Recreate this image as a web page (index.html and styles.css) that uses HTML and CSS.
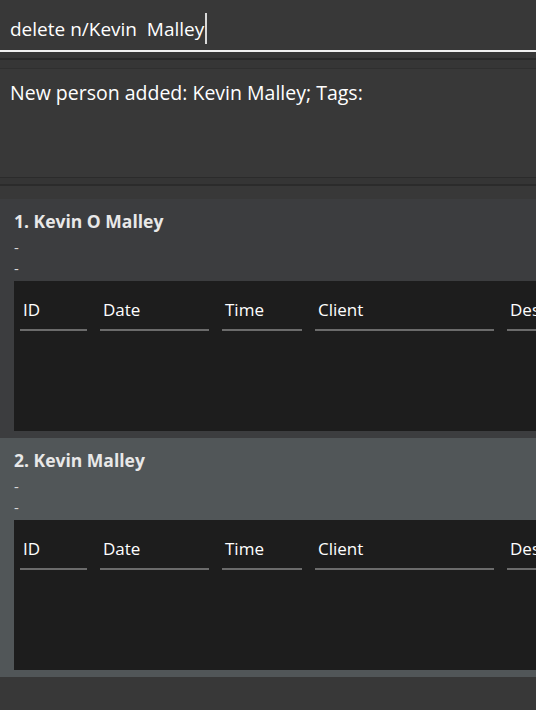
FILE: index.html
```html
<!DOCTYPE html>
<html>
<head>
<meta charset="utf-8">
<link rel="stylesheet" href="styles.css">
</head>
<body>
<div class="app">
  <div class="command">
    <div class="command-field"><span class="command-text">delete n/Kevin&nbsp; Malley</span><span class="caret"></span></div>
  </div>
  <div class="divider divider-a"></div>
  <div class="result">New person added: Kevin Malley; Tags:</div>
  <div class="divider divider-b"></div>
  <div class="list">
    <div class="card">
      <div class="name">1. Kevin O Malley</div>
      <div class="dash">-</div>
      <div class="dash">-</div>
      <div class="table">
        <div class="col col-id">ID</div>
        <div class="col col-date">Date</div>
        <div class="col col-time">Time</div>
        <div class="col col-client">Client</div>
        <div class="col col-desc">Description</div>
      </div>
    </div>
    <div class="card selected">
      <div class="name">2. Kevin Malley</div>
      <div class="dash">-</div>
      <div class="dash">-</div>
      <div class="table">
        <div class="col col-id">ID</div>
        <div class="col col-date">Date</div>
        <div class="col col-time">Time</div>
        <div class="col col-client">Client</div>
        <div class="col col-desc">Description</div>
      </div>
    </div>
  </div>
</div>
</body>
</html>
```
FILE: styles.css
```css
html, body {
  margin: 0;
  padding: 0;
  background: #383838;
}
body {
  width: 536px;
  height: 710px;
  overflow: hidden;
  font-family: "Open Sans", "Noto Sans", sans-serif;
  color: #ffffff;
}
.app {
  display: flex;
  flex-direction: column;
}
.command {
  background: #383838;
  height: 50px;
  border-bottom: 2px solid #f2f2f2;
}
.command-field {
  display: flex;
  align-items: center;
  height: 50px;
  box-sizing: border-box;
  padding: 7px 0 0 10px;
}
.command-text {
  font-size: 19px;
  color: #ffffff;
}
.caret {
  width: 2px;
  height: 31px;
  background: #d8d8d8;
  margin-left: 1px;
}
.divider-a {
  height: 17px;
  background: linear-gradient(#383838 0, #383838 6px, #2b2b2b 6px, #2b2b2b 8px, #363636 8px, #363636 16px, #2f2f2f 16px);
}
.result {
  height: 107px;
  padding: 10px 10px 0;
  box-sizing: border-box;
  font-size: 19.5px;
  background: #383838;
}
.divider-b {
  height: 23px;
  background: linear-gradient(#383838 0, #383838 1px, #2b2b2b 1px, #2b2b2b 2px, #353535 2px, #353535 8px, #2b2b2b 8px, #2b2b2b 10px, #383838 10px);
}
.list {
  display: flex;
  flex-direction: column;
}
.card {
  background: #3c3d3f;
  height: 239px;
  box-sizing: border-box;
  padding: 9px 0 7px 14px;
  display: flex;
  flex-direction: column;
}
.card.selected {
  background: #515658;
}
.name {
  font-weight: 700;
  font-size: 17.5px;
  line-height: 27px;
  color: #e8e8e8;
}
.dash {
  font-size: 15px;
  line-height: 21px;
  color: #d8d8d8;
}
.name + .dash {
  margin-top: 2px;
}
.table {
  margin-top: 2px;
  flex: 1;
  background: #1d1d1d;
  display: flex;
  align-items: flex-start;
  padding: 17px 0 0 6px;
  gap: 13px;
  overflow: hidden;
}
.col {
  flex: none;
  font-size: 17px;
  line-height: 23px;
  padding: 0 0 8px 3px;
  border-bottom: 2px solid #6b6b6b;
  color: #ffffff;
  box-sizing: border-box;
  white-space: nowrap;
  overflow: hidden;
}
.col-id { width: 67px; }
.col-date { width: 109px; }
.col-time { width: 80px; }
.col-client { width: 179px; }
.col-desc { width: 120px; }
```
